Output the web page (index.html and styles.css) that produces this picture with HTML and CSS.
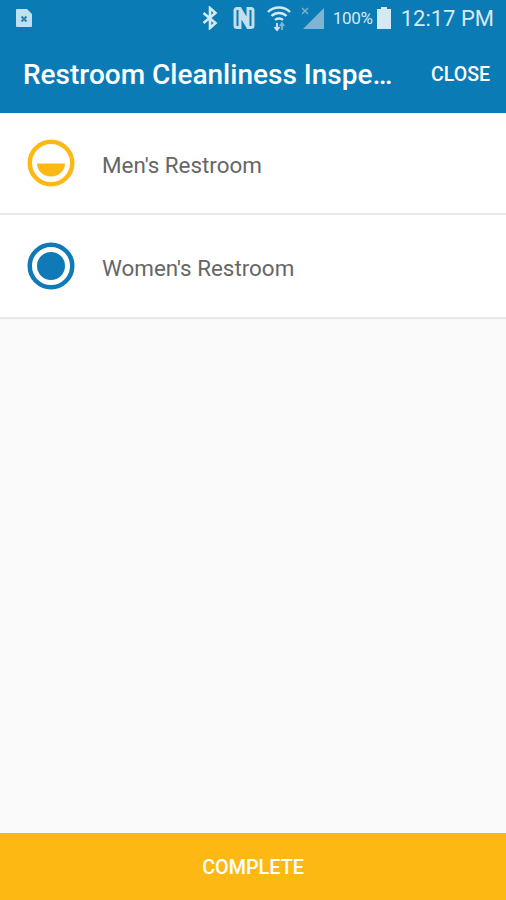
FILE: index.html
```html
<!DOCTYPE html>
<html lang="en">
<head>
  <meta charset="UTF-8">
  <meta name="viewport" content="width=device-width, initial-scale=1.0">
  <title>Restroom Cleanliness Inspection</title>
  <link rel="stylesheet" href="styles.css">
</head>
<body>
  <div class="app">
    <header class="header">
      <div class="status-bar">
        <svg class="icon-file" width="18" height="20" viewBox="0 0 18 20">
          <path d="M2 1h10l5 5v12a1 1 0 0 1-1 1H2a1 1 0 0 1-1-1V2a1 1 0 0 1 1-1z" fill="#bfe0ee"/>
          <path d="M6.500 8.500l5 5M11.500 8.500l-5 5" stroke="#2a7fae" stroke-width="1.800"/>
        </svg>
        <div class="status-right">
          <svg class="icon-bluetooth" width="16" height="24" viewBox="0 0 16 24" fill="none" stroke="#d5e9f3" stroke-width="2.600">
            <path d="M1.500 7l12 10-5.500 5V2l5.500 5-12 10"/>
          </svg>
          <svg class="icon-nfc" width="24" height="24" viewBox="0 0 24 24" fill="none" stroke="#c3deec" stroke-width="3">
            <path d="M5 2.500a2 2 0 0 0-2 2v15a2 2 0 0 0 2 2h3V8l8 13.500h3a2 2 0 0 0 2-2v-15a2 2 0 0 0-2-2h-3V16L8 2.500z"/>
          </svg>
          <svg class="icon-wifi" width="26" height="28" viewBox="0 0 26 28" fill="none" stroke="#d5e9f3" stroke-width="2.400">
            <path d="M2 8c6-6 16-6 22 0M5.500 12c4-4 11-4 15 0M9 16c2-2 6-2 8 0"/>
            <path d="M11 19v7M8.500 23l2.500 3 2.500-3" stroke-width="1.800"/>
            <path d="M16 26v-7M13.800 22l2.200-3 2.200 3" stroke="#7fb5d3" stroke-width="1.800"/>
          </svg>
          <svg class="icon-signal" width="24" height="24" viewBox="0 0 24 24">
            <path d="M23 2v21H2z" fill="#7fb5d3"/>
            <path d="M1 2l6 6M7 2L1 8" stroke="#7fb5d3" stroke-width="1.300"/>
          </svg>
          <span class="battery-text">100%</span>
          <svg class="icon-battery" width="16" height="24" viewBox="0 0 16 24">
            <path d="M5 1h6v2h4v20H1V3h4z" fill="#d5e9f3"/>
          </svg>
          <span class="clock">12:17 PM</span>
        </div>
      </div>
      <div class="toolbar">
        <h1 class="title">Restroom Cleanliness Inspe…</h1>
        <span class="close">CLOSE</span>
      </div>
    </header>

    <main class="list">
      <div class="row">
        <svg class="row-icon" width="48" height="48" viewBox="0 0 48 48">
          <circle cx="24" cy="24" r="21.250" fill="none" stroke="#fdb813" stroke-width="4.500"/>
          <path d="M10 24.500h28a14 13 0 0 1-28 0z" fill="#fdb813"/>
        </svg>
        <span class="row-label">Men's Restroom</span>
      </div>
      <div class="row">
        <svg class="row-icon" width="48" height="48" viewBox="0 0 48 48">
          <circle cx="24" cy="24" r="21.250" fill="none" stroke="#0f7ab5" stroke-width="4.500"/>
          <circle cx="24" cy="24" r="14" fill="#0f7ab5"/>
        </svg>
        <span class="row-label">Women's Restroom</span>
      </div>
    </main>

    <button class="complete">COMPLETE</button>
  </div>
</body>
</html>
```

FILE: styles.css
```css
* {
  box-sizing: border-box;
}

html, body {
  height: 100%;
}

body {
  margin: 0;
  font-family: Roboto, "Liberation Sans", sans-serif;
  background-color: #fafafa;
}

.app {
  display: flex;
  flex-direction: column;
  height: 100vh;
  overflow: hidden;
}

.header {
  height: 113px;
  background-color: #0a7bb5;
  box-shadow: 0 1px 4px rgba(0, 0, 0, 0.25);
  color: #fff;
}

.status-bar {
  display: flex;
  justify-content: space-between;
  align-items: center;
  height: 36px;
  padding: 0 12px 0 15px;
}

.status-right {
  display: flex;
  align-items: center;
}

.status-right svg {
  flex: none;
}

.icon-bluetooth {
  margin-right: 14px;
}

.icon-wifi {
  margin-left: 10px;
}

.icon-signal {
  margin-left: 9px;
}

.battery-text {
  margin-left: 8px;
  font-size: 17px;
  letter-spacing: -0.3px;
  color: #d5e9f3;
}

.icon-battery {
  margin-left: 3px;
}

.clock {
  margin-left: 9px;
  font-size: 22px;
  color: #d5e9f3;
}

.toolbar {
  display: flex;
  justify-content: space-between;
  align-items: center;
  height: 77px;
  padding: 0 16px 0 23px;
}

.title {
  margin: 0;
  font-size: 28px;
  font-weight: 500;
  white-space: nowrap;
}

.close {
  font-size: 19.500px;
  font-weight: 500;
}

.list {
  flex: 1;
}

.row {
  display: flex;
  align-items: center;
  gap: 27px;
  height: 102px;
  padding-left: 27px;
  background-color: #fff;
  border-bottom: 2px solid #e8e8e8;
}

.row:last-child {
  height: 104px;
}

.row-label {
  padding-top: 3px;
  font-size: 22.400px;
  color: #666;
}

.complete {
  display: block;
  width: 100%;
  height: 67px;
  padding-top: 3px;
  border: none;
  background-color: #fdb813;
  color: #fff;
  font-family: inherit;
  font-size: 19.800px;
  font-weight: 500;
}
```
